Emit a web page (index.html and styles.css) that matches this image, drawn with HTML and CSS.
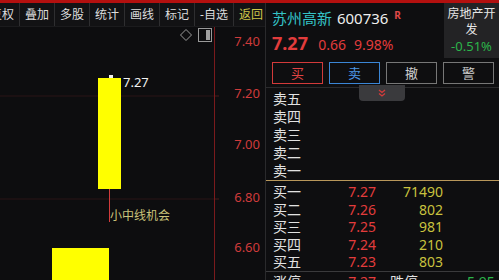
FILE: index.html
```html
<!DOCTYPE html>
<html lang="zh-CN">
<head>
    <meta charset="UTF-8">
    <meta name="viewport" content="width=device-width, initial-scale=1.0">
    <title>苏州高新 600736</title>
    <link rel="stylesheet" href="styles.css">
</head>
<body>
    <div class="topline"></div>
    <div class="main">
        <div class="chart">
            <div class="toolbar">
                <span class="tab first">复权</span>
                <span class="tab">叠加</span>
                <span class="tab">多股</span>
                <span class="tab">统计</span>
                <span class="tab">画线</span>
                <span class="tab">标记</span>
                <span class="tab">-自选</span>
                <span class="tab back">返回</span>
            </div>
            <svg class="plot" width="265" height="253" viewBox="0 0 265 253">
                <!-- grid + axis -->
                <line class="grid" x1="0" y1="69" x2="214" y2="69"/>
                <line class="grid" x1="0" y1="172" x2="214" y2="172"/>
                <line class="axis" x1="214.5" y1="0" x2="214.5" y2="253"/>
                <line class="tick" x1="215" y1="69" x2="219" y2="69"/>
                <line class="tick" x1="215" y1="172" x2="219" y2="172"/>
                <text class="ylabel" x="260" y="16">7.40</text>
                <text class="ylabel" x="260" y="68">7.20</text>
                <text class="ylabel" x="260" y="119">7.00</text>
                <text class="ylabel" x="260" y="172">6.80</text>
                <text class="ylabel" x="260" y="222">6.60</text>

                <!-- tools -->
                <path class="icon" d="M186 2.5 L191.5 8 L186 13.5 L180.5 8 Z"/>
                <rect class="icon" x="198.5" y="1.5" width="13" height="13"/>
                <rect class="icon-fill" x="206" y="3" width="4" height="10"/>

                <!-- candles -->
                <rect class="candle" x="98" y="51" width="23" height="111"/>
                <path class="mark" d="M109 48 L113 48 L113 51 L109 51 Z"/>
                <text class="last" x="123" y="57">7.27</text>
                <line class="wick" x1="109.5" y1="162" x2="109.5" y2="195"/>
                <text class="note" x="110" y="190">小中线机会</text>
                <rect class="candle" x="52" y="221" width="57" height="40"/>
            </svg>
        </div>

        <div class="panel">
            <div class="quote">
                <div class="quote-left">
                    <div class="title">
                        <span class="name">苏州高新</span>
                        <span class="code">600736</span>
                        <sup class="flag">R</sup>
                    </div>
                    <div class="price">
                        <span class="now">7.27</span>
                        <span class="chg">0.66</span>
                        <span class="chg">9.98%</span>
                    </div>
                </div>
                <div class="sector">
                    <div>房地产开</div>
                    <div>发</div>
                    <div class="sector-chg">-0.51%</div>
                </div>
            </div>

            <div class="trade-btns">
                <span class="btn buy">买</span>
                <span class="btn sell">卖</span>
                <span class="btn">撤</span>
                <span class="btn">警</span>
            </div>

            <div class="book">
                <div class="fold">
                    <svg width="10" height="8" viewBox="0 0 10 8">
                        <path d="M2 1 L5 3.5 L8 1 M2 4.5 L5 7 L8 4.5" fill="none" stroke="#d23b3b" stroke-width="1.3"/>
                    </svg>
                </div>
                <div class="asks">
                    <div class="row"><span>卖五</span><span></span><span></span></div>
                    <div class="row"><span>卖四</span><span></span><span></span></div>
                    <div class="row"><span>卖三</span><span></span><span></span></div>
                    <div class="row"><span>卖二</span><span></span><span></span></div>
                    <div class="row"><span>卖一</span><span></span><span></span></div>
                </div>
                <div class="bids">
                    <div class="row"><span>买一</span><span class="p">7.27</span><span class="v">71490</span></div>
                    <div class="row"><span>买二</span><span class="p">7.26</span><span class="v">802</span></div>
                    <div class="row"><span>买三</span><span class="p">7.25</span><span class="v">981</span></div>
                    <div class="row"><span>买四</span><span class="p">7.24</span><span class="v">210</span></div>
                    <div class="row"><span>买五</span><span class="p">7.23</span><span class="v">803</span></div>
                </div>
                <div class="limits">
                    <span class="lbl">涨停</span>
                    <span class="p">7.27</span>
                    <span class="lbl dn">跌停</span>
                    <span class="g">5.95</span>
                </div>
            </div>
        </div>
    </div>
</body>
</html>
```

FILE: styles.css
```css
:root {
    --bg: #0d0d0f;
    --panel-bg: #0e0e10;
    --red: #e23c3c;
    --axis-red: #cf3b3b;
    --yellow: #c9c23e;
    --green: #2bb54a;
    --line: #2a2a2c;
}

body {
    margin: 0;
    width: 499px;
    height: 280px;
    overflow: hidden;
    background-color: var(--bg);
    color: #e2e2e2;
    font-family: "Noto Sans", "Noto Sans CJK SC", sans-serif;
}

.topline {
    height: 3px;
    background-color: #b3100f;
}

.main {
    display: flex;
    height: 277px;
}

/* chart side */

.chart {
    flex: none;
    width: 265px;
    overflow: hidden;
}

.toolbar {
    display: flex;
    height: 23px;
    background-color: #121214;
    border-bottom: 1px solid #1b1b1d;
    overflow: hidden;
}

.tab {
    flex: none;
    padding: 0 5px;
    font-size: 12px;
    line-height: 23px;
    color: #dcdcdc;
    white-space: nowrap;
    border-left: 1px solid #2e2e30;
}

.tab.first {
    margin-left: -15px;
    border-left: none;
}

.tab.back {
    color: #cfc54a;
}

.plot {
    display: block;
}

.grid {
    stroke: #2b1416;
    stroke-width: 1;
}

.axis {
    stroke: #7a1a1c;
    stroke-width: 1;
}

.tick {
    stroke: #4a1a1a;
}

.ylabel {
    fill: var(--axis-red);
    font-size: 13px;
    text-anchor: end;
    dominant-baseline: middle;
}

.icon {
    fill: none;
    stroke: #9a9a9a;
    stroke-width: 1;
}

.icon-fill {
    fill: #a0a0a0;
}

.candle {
    fill: #ffff00;
}

.mark {
    fill: #f0f0f0;
}

.last {
    fill: #f2f2f2;
    font-size: 13px;
    dominant-baseline: middle;
}

.wick {
    stroke: #d23b3b;
    stroke-width: 1;
}

.note {
    fill: #c9c27a;
    font-size: 12px;
    dominant-baseline: middle;
}

/* quote panel */

.panel {
    flex: 1;
    position: relative;
    background-color: var(--panel-bg);
    border-left: 1px solid var(--line);
}

.quote {
    display: flex;
    height: 59px;
}

.quote-left {
    flex: 1;
    padding-left: 6px;
}

.title {
    margin-top: 4px;
    height: 22px;
    line-height: 22px;
    font-size: 15px;
    white-space: nowrap;
}

.name {
    color: #34c2c6;
}

.code {
    color: #eeeeee;
    margin-left: 1px;
}

.flag {
    color: #e04848;
    font-size: 10px;
    font-weight: bold;
    vertical-align: top;
    line-height: 16px;
    margin-left: 2px;
}

.price {
    margin-top: 2px;
    line-height: 24px;
    white-space: nowrap;
    color: var(--red);
}

.now {
    font-size: 18px;
    font-weight: bold;
    margin-right: 6px;
}

.chg {
    font-size: 14px;
    margin-right: 4px;
}

.sector {
    flex: none;
    width: 55px;
    height: 55px;
    padding-top: 3px;
    box-sizing: border-box;
    background-color: #232325;
    text-align: center;
    font-size: 12px;
    line-height: 16px;
    color: #e6e6e6;
}

.sector-chg {
    font-size: 13px;
    color: var(--green);
}

.trade-btns {
    display: flex;
    gap: 6px;
    padding-left: 6px;
}

.btn {
    width: 51px;
    height: 22px;
    box-sizing: border-box;
    border: 1px solid #777;
    text-align: center;
    font-size: 13px;
    line-height: 20px;
    color: #cfcfcf;
}

.btn.buy {
    border-color: #d33a3a;
    color: #e04444;
}

.btn.sell {
    border-color: #3b86d6;
    color: #4d97e6;
}

/* order book */

.book {
    position: relative;
    margin-top: 3px;
    border-top: 1px solid var(--line);
}

.fold {
    position: absolute;
    left: 93px;
    top: -3px;
    width: 46px;
    height: 16px;
    background-color: #3a3a3d;
    border-radius: 0 0 4px 4px;
    display: flex;
    justify-content: center;
    align-items: center;
}

.asks {
    padding-top: 2px;
    border-bottom: 1px solid #b8975a;
}

.bids {
    padding-top: 2px;
    border-bottom: 1px solid #3a3a3c;
}

.row {
    display: grid;
    grid-template-columns: 63px 40px 67px;
    padding-left: 7px;
    height: 18px;
    line-height: 18px;
    font-size: 14px;
}

.bids .row {
    height: 17.5px;
    line-height: 17.5px;
}

.p {
    color: var(--red);
    text-align: right;
}

.v {
    color: var(--yellow);
    text-align: right;
}

.limits {
    display: flex;
    padding-left: 7px;
    padding-top: 1px;
    font-size: 14px;
    line-height: 18px;
    white-space: nowrap;
}

.limits .lbl {
    width: 63px;
}

.limits .p {
    width: 40px;
}

.limits .dn {
    margin-left: 14px;
}

.g {
    color: var(--green);
    margin-left: 14px;
}
```
